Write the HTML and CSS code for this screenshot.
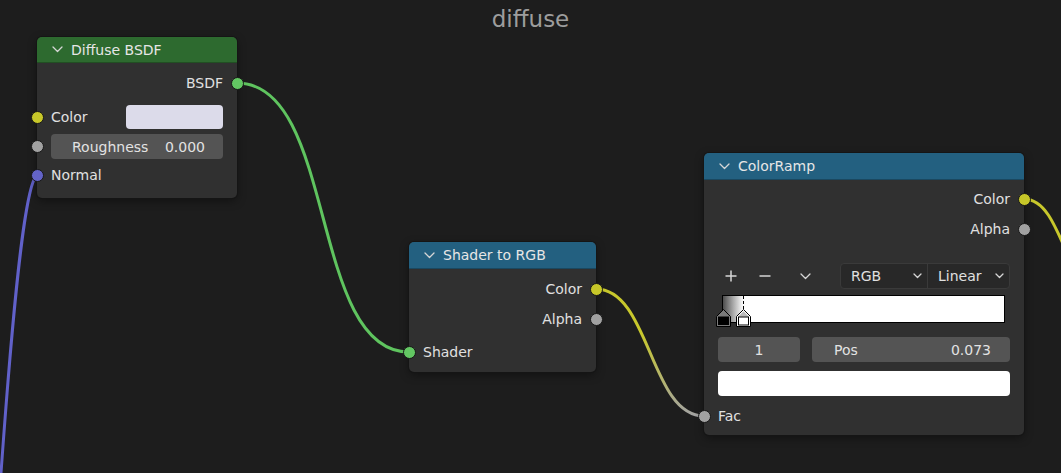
FILE: index.html
```html
<!DOCTYPE html>
<html lang="en">
<head>
  <meta charset="UTF-8" />
  <title>diffuse</title>
  <link rel="stylesheet" href="styles.css">
</head>
<body>
  <div class="editor">
    <div class="title">diffuse</div>

    <svg class="wires" width="1061" height="473" viewBox="0 0 1061 473">
      <defs>
        <linearGradient id="colorToFac" gradientUnits="userSpaceOnUse" x1="0" y1="289" x2="0" y2="416">
          <stop offset="0" stop-color="#c8c82c" />
          <stop offset="0.35" stop-color="#c8c82c" />
          <stop offset="1" stop-color="#a3a3a3" />
        </linearGradient>
      </defs>
      <path d="M37 175 C24 185, 12 320, 1 473" stroke="#6161c9" />
      <path d="M237 83 C337 83, 309 352, 409 352" stroke="#5fc45f" />
      <path d="M596 289 C650 289, 650 416, 704 416" stroke="url(#colorToFac)" />
      <path d="M1024 199 C1044 199, 1054 222, 1070 260" stroke="#c8c82c" />
    </svg>

    <!-- Diffuse BSDF -->
    <div class="node node-diffuse">
      <div class="node-header header-shader">
        <svg class="chevron" width="11" height="7" viewBox="0 0 11 7"><polyline points="1,1 5.5,5.5 10,1" /></svg>
        <span>Diffuse BSDF</span>
      </div>
      <div class="node-body body-diffuse">
        <div class="row row-out"><span>BSDF</span><i class="socket sock-shader"></i></div>
        <div class="row row-in gap-10"><span>Color</span><div class="swatch swatch-lilac"></div><i class="socket sock-color"></i></div>
        <div class="row row-in row-field gap-5">
          <div class="field field-slider"><span>Roughness</span><span>0.000</span></div>
          <i class="socket sock-float"></i>
        </div>
        <div class="row row-in gap-4"><span>Normal</span><i class="socket sock-vector"></i></div>
      </div>
    </div>

    <!-- Shader to RGB -->
    <div class="node node-shader-rgb">
      <div class="node-header header-converter">
        <svg class="chevron" width="11" height="7" viewBox="0 0 11 7"><polyline points="1,1 5.5,5.5 10,1" /></svg>
        <span>Shader to RGB</span>
      </div>
      <div class="node-body body-shader-rgb">
        <div class="row row-out"><span>Color</span><i class="socket sock-color"></i></div>
        <div class="row row-out gap-6"><span>Alpha</span><i class="socket sock-float"></i></div>
        <div class="row row-in gap-9"><span>Shader</span><i class="socket sock-shader"></i></div>
      </div>
    </div>

    <!-- ColorRamp -->
    <div class="node node-ramp">
      <div class="node-header header-converter">
        <svg class="chevron" width="11" height="7" viewBox="0 0 11 7"><polyline points="1,1 5.5,5.5 10,1" /></svg>
        <span>ColorRamp</span>
      </div>
      <div class="node-body body-ramp">
        <div class="row row-out"><span>Color</span><i class="socket sock-color"></i></div>
        <div class="row row-out gap-6"><span>Alpha</span><i class="socket sock-float"></i></div>

        <div class="ramp-tools">
          <div class="tool">
            <svg width="12" height="12" viewBox="0 0 12 12"><path d="M6 0.5 V11.5 M0.5 6 H11.5" /></svg>
          </div>
          <div class="tool tool-minus">
            <svg width="12" height="12" viewBox="0 0 12 12"><path d="M0.5 6 H11.5" /></svg>
          </div>
          <div class="tool tool-menu">
            <svg width="11" height="7" viewBox="0 0 11 7"><polyline points="1,1 5.5,5.5 10,1" /></svg>
          </div>
          <div class="select">
            <div class="select-part part-mode">
              <span>RGB</span>
              <svg width="9" height="6" viewBox="0 0 9 6"><polyline points="1,1 4.5,4.5 8,1" /></svg>
            </div>
            <div class="select-part part-interp">
              <span>Linear</span>
              <svg width="9" height="6" viewBox="0 0 9 6"><polyline points="1,1 4.5,4.5 8,1" /></svg>
            </div>
          </div>
        </div>

        <div class="ramp-bar">
          <div class="ramp-dash"></div>
          <svg class="ramp-marker marker-first" width="15" height="18" viewBox="0 0 15 18">
            <path d="M0.5 17.5 V7.5 L7.5 0.5 L14.5 7.5 V17.5 Z" fill="#7a7a7a" stroke="#000" />
            <rect x="2" y="7.5" width="11" height="8.5" fill="#000" />
          </svg>
          <svg class="ramp-marker marker-active" width="15" height="18" viewBox="0 0 15 18">
            <path d="M0.5 17.5 V7.5 L7.5 0.5 L14.5 7.5 V17.5 Z" fill="#fff" stroke="#000" />
            <path d="M2 7.8 L7.5 2.3 L13 7.8 Z" fill="#b9b9b9" />
            <rect x="2.5" y="8" width="10" height="8" fill="#fff" stroke="#000" stroke-width="1" />
          </svg>
        </div>

        <div class="ramp-fields">
          <div class="field field-index">1</div>
          <div class="field field-pos"><span>Pos</span><span>0.073</span></div>
        </div>

        <div class="swatch swatch-white"></div>

        <div class="row row-in gap-8"><span>Fac</span><i class="socket sock-float"></i></div>
      </div>
    </div>
  </div>
</body>
</html>
```

FILE: styles.css
```css
* {
  box-sizing: border-box;
}
body {
  margin: 0;
  background: #1d1d1d;
  font-family: 'DejaVu Sans', 'Liberation Sans', sans-serif;
  font-size: 14px;
  color: #e0e0e0;
}
.editor {
  position: relative;
  width: 1061px;
  height: 473px;
  overflow: hidden;
}
.title {
  text-align: center;
  font-size: 23px;
  line-height: 27px;
  padding-top: 6px;
  color: #9d9d9d;
}
.wires {
  position: absolute;
  left: 0;
  top: 0;
}
.wires path {
  fill: none;
  stroke-width: 3;
  stroke-linecap: round;
}

/* nodes sit on the free canvas */
.node {
  position: absolute;
  background: #303030;
  border-radius: 5px;
  box-shadow: 0 0 0 1px #151515, 0 3px 10px rgba(0, 0, 0, 0.4);
}
.node-diffuse {
  left: 37px;
  top: 37px;
  width: 200px;
}
.node-shader-rgb {
  left: 409px;
  top: 242px;
  width: 187px;
}
.node-ramp {
  left: 704px;
  top: 153px;
  width: 320px;
}
.node-header {
  height: 27px;
  display: flex;
  align-items: center;
  gap: 8px;
  padding-left: 15px;
  border-radius: 5px 5px 0 0;
  color: #e6e6e6;
  border-bottom: 1px solid rgba(0, 0, 0, 0.25);
}
.node-diffuse .node-header {
  height: 26px;
}
.header-shader {
  background: #2d6a2f;
}
.header-converter {
  background: #236080;
}
.chevron polyline,
.tool polyline,
.select polyline {
  fill: none;
  stroke: #d6d6d6;
  stroke-width: 1.3;
  stroke-linecap: round;
  stroke-linejoin: round;
}
.node-body {
  display: flex;
  flex-direction: column;
  padding: 0 14px;
}
.body-diffuse {
  padding-top: 8px;
  padding-bottom: 11px;
}
.body-shader-rgb {
  padding-top: 8px;
  padding-bottom: 8px;
}
.body-ramp {
  padding-top: 7px;
  padding-bottom: 7px;
}

.row {
  position: relative;
  height: 24px;
  display: flex;
  align-items: center;
}
.row-out {
  justify-content: flex-end;
}
.row-in {
  justify-content: space-between;
}
.row-field {
  height: 25px;
}
.gap-4 { margin-top: 4px; }
.gap-5 { margin-top: 5px; }
.gap-6 { margin-top: 6px; }
.gap-8 { margin-top: 8px; }
.gap-9 { margin-top: 9px; }
.gap-10 { margin-top: 10px; }

.socket {
  position: absolute;
  top: 50%;
  width: 13px;
  height: 13px;
  margin-top: -6.5px;
  border-radius: 50%;
  border: 1px solid #171717;
}
.row-out .socket {
  right: -20.5px;
}
.row-in .socket {
  left: -20.5px;
}
.sock-shader { background: #63c763; }
.sock-color { background: #c7c729; }
.sock-float { background: #a1a1a1; }
.sock-vector { background: #6363c7; }

.swatch {
  height: 24px;
  border-radius: 4px;
}
.swatch-lilac {
  width: 97px;
  background: #dcdbea;
}
.swatch-white {
  height: 25px;
  margin-top: 9px;
  background: #fff;
}
.field {
  height: 25px;
  border-radius: 4px;
  background: #545454;
  display: flex;
  align-items: center;
  color: #e2e2e2;
}
.field-slider {
  flex: 1;
  justify-content: space-between;
  padding: 0 18px 0 21px;
}

/* color ramp widgets */
.ramp-tools {
  display: flex;
  align-items: center;
  height: 26px;
  margin-top: 22px;
}
.tool {
  width: 26px;
  height: 26px;
  display: flex;
  align-items: center;
  justify-content: center;
}
.tool path {
  fill: none;
  stroke: #d6d6d6;
  stroke-width: 1.5;
}
.tool-minus {
  margin-left: 8px;
}
.tool-menu {
  margin-left: 14px;
}
.select {
  margin-left: auto;
  display: flex;
  width: 170px;
  height: 26px;
  background: #282828;
  border: 1px solid #3a3a3a;
  border-radius: 4px;
}
.select-part {
  display: flex;
  align-items: center;
  justify-content: space-between;
  padding: 0 5px 0 10px;
}
.part-mode {
  width: 86px;
}
.part-interp {
  flex: 1;
  border-left: 1px solid #3a3a3a;
}
.ramp-bar {
  position: relative;
  height: 28px;
  margin: 6px 5px 0 4px;
  border: 1px solid #000;
  background: linear-gradient(90deg, #4c4c4c 0, #a8a8a8 10px, #f4f4f4 19px, #fff 22px);
}
.ramp-dash {
  position: absolute;
  left: 20px;
  top: 0;
  height: 13px;
  border-left: 1px dashed #000;
}
.ramp-marker {
  position: absolute;
  top: 13px;
}
.marker-first {
  left: -7px;
}
.marker-active {
  left: 13px;
}
.ramp-fields {
  display: flex;
  gap: 12px;
  margin-top: 14px;
}
.field-index {
  width: 82px;
  justify-content: center;
}
.field-pos {
  flex: 1;
  justify-content: space-between;
  padding: 0 19px 0 22px;
}
```
